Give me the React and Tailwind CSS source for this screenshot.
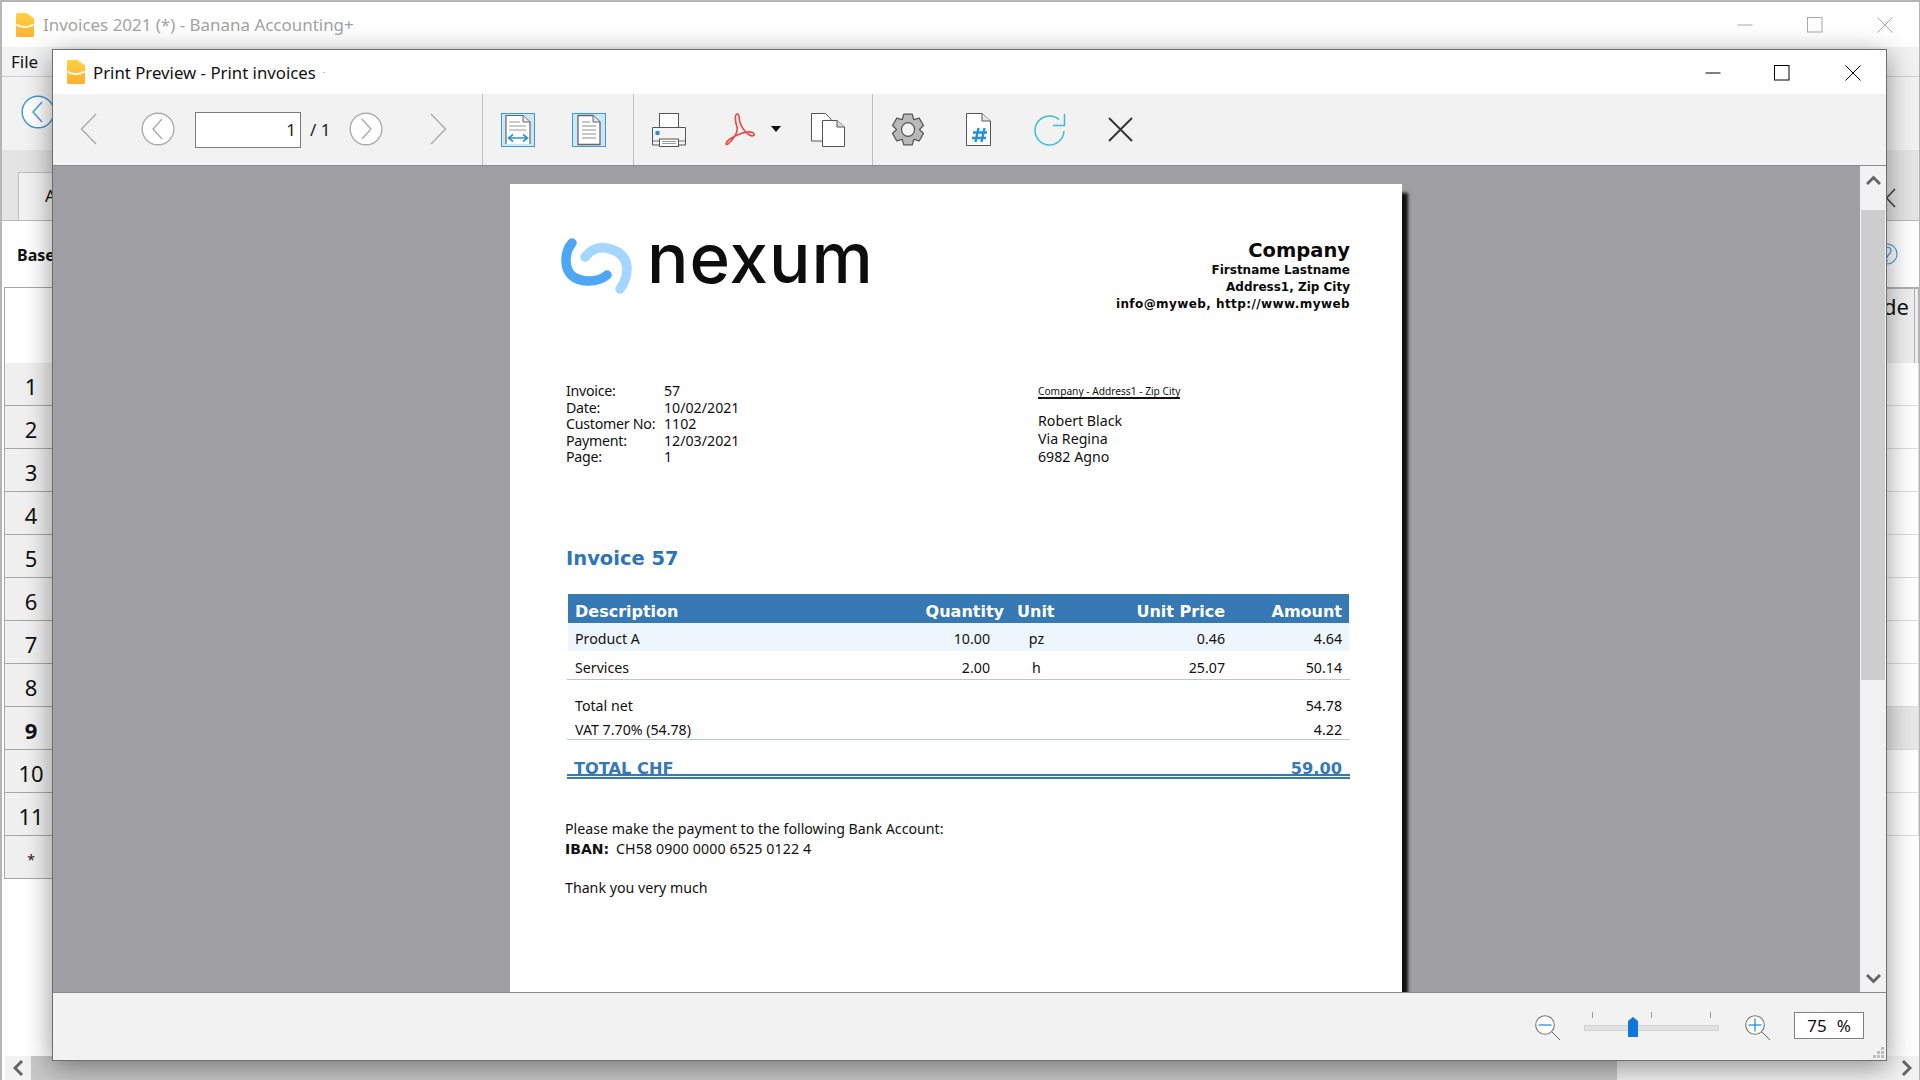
const doc = "font-['Noto_Sans','DejaVu_Sans',sans-serif]";
const bold = "font-['DejaVu_Sans',sans-serif] font-bold";

function BananaLogo({ className, id }) {
  return (
    <svg viewBox="0 0 18 24" width="18" height="24" className={className}>
      <defs>
        <linearGradient id={id} x1="0" y1="0" x2="0" y2="1">
          <stop offset="0" stopColor="#ffd23e" />
          <stop offset="1" stopColor="#ffb033" />
        </linearGradient>
      </defs>
      <path d="M1.5 0H10.5L18 5.5V22.5A1.5 1.5 0 0 1 16.5 24H1.5A1.5 1.5 0 0 1 0 22.5V1.5A1.5 1.5 0 0 1 1.5 0Z" fill={`url(#${id})`} />
      <path d="M0.5 11.5C5 15 13 15 17.5 11.5" fill="none" stroke="#fff" strokeWidth="1.8" />
    </svg>
  );
}

function WinControls({ color, gapA, gapB }) {
  return (
    <div className="flex items-center">
      <svg width="16" height="16" viewBox="0 0 16 16"><path d="M0.5 8H15.5" stroke={color} strokeWidth="1" /></svg>
      <svg width="16" height="16" viewBox="0 0 16 16" className={gapA}><rect x="0.5" y="0.5" width="14.5" height="14.5" fill="none" stroke={color} strokeWidth="1" /></svg>
      <svg width="16" height="16" viewBox="0 0 16 16" className={gapB}><path d="M0.5 0.5L15.5 15.5M15.5 0.5L0.5 15.5" stroke={color} strokeWidth="1" /></svg>
    </div>
  );
}

function CircleArrow({ left, className, color = "#adadad", chev = "#a8a8a8", fill = "#fff" }) {
  return (
    <svg width="34" height="34" viewBox="0 0 34 34" className={className}>
      <circle cx="17" cy="17" r="15.8" fill={fill} stroke={color} strokeWidth="1.4" />
      <path d={left ? "M21 7L12 17L21 27" : "M13 7L22 17L13 27"} fill="none" stroke={chev} strokeWidth="1.3" />
    </svg>
  );
}

function BigChevron({ left, className }) {
  return (
    <svg width="17" height="32" viewBox="0 0 17 32" className={className}>
      <path d={left ? "M16 1L1.5 16L16 31" : "M1 1L15.5 16L1 31"} fill="none" stroke="#ababab" strokeWidth="1.4" />
    </svg>
  );
}

function FitWidth({ className }) {
  return (
    <div className={"w-[34px] h-[34px] bg-[#cfe6f7] border border-[#3a9ad9] flex items-center justify-center " + className}>
      <svg width="28" height="32" viewBox="0 0 28 32">
        <path d="M2 30V1.5H19L26 8V30" fill="#fff" stroke="#666" strokeWidth="1.2" />
        <path d="M19 1.5V8H26" fill="#e8e8e8" stroke="#666" strokeWidth="1" />
        <path d="M5 8H16M5 12H22M5 16H22" stroke="#bbb" strokeWidth="1.3" />
        <path d="M5 24H23M9 20.5L4.5 24L9 27.5M19 20.5L23.5 24L19 27.5" fill="none" stroke="#2f93d9" strokeWidth="1.6" />
      </svg>
    </div>
  );
}

function FullPage({ className }) {
  return (
    <div className={"w-[34px] h-[34px] bg-[#cfe6f7] border border-[#3a9ad9] flex items-center justify-center " + className}>
      <svg width="26" height="32" viewBox="0 0 26 32">
        <path d="M2 30.5V1.5H17L24 8V30.5Z" fill="#fff" stroke="#666" strokeWidth="1.3" />
        <path d="M17 1.5V8H24" fill="#e8e8e8" stroke="#666" strokeWidth="1" />
        <path d="M6 8H14M6 12H20M6 16H20M6 20H20M6 24H20" stroke="#b5b5b5" strokeWidth="1.4" />
      </svg>
    </div>
  );
}

function Printer({ className }) {
  return (
    <svg width="34" height="34" viewBox="0 0 34 34" className={className}>
      <rect x="7.5" y="0.5" width="19" height="14" fill="#fff" stroke="#555" />
      <path d="M0.5 14.5H33.5V32H0.5Z" fill="#f4f4f4" stroke="#555" />
      <path d="M0.5 28H33.5" stroke="#555" strokeWidth="0.8" />
      <rect x="3.5" y="18" width="4" height="4" fill="#2a8ed8" />
      <rect x="7.5" y="26" width="19" height="7.5" fill="#fff" stroke="#555" />
      <path d="M10 28.5H24M10 30.5H24" stroke="#9a9a9a" strokeWidth="1" />
    </svg>
  );
}

function Pdf({ className }) {
  return (
    <svg width="31" height="33" viewBox="0 0 31 33" className={className}>
      <path d="M12.5 1C9.5 1 10 8 12 14C13.5 19 8 27 3 31C0 33 0.5 29 5 26C10 22.5 22 17 27.5 19.5C31.5 21.5 28 24 24.5 22C20 19.5 15.5 13 14.5 7.5C14 4.5 14.5 1 12.5 1Z" fill="none" stroke="#f04444" strokeWidth="1.6" />
    </svg>
  );
}

function Copy({ className }) {
  return (
    <svg width="34" height="34" viewBox="0 0 34 34" className={className}>
      <path d="M0.5 0.5H14.5L20 6V28H0.5Z" fill="#fff" stroke="#555" />
      <path d="M11.5 7.5H26L33.5 14V33.5H11.5Z" fill="#fff" stroke="#555" />
      <path d="M26 7.5V14H33.5" fill="#ddd" stroke="#555" />
    </svg>
  );
}

function gearPath() {
  const cx = 17, cy = 16.5;
  let d = "";
  for (let i = 0; i < 6; i++) {
    const a = (i * Math.PI * 2) / 6 - Math.PI / 2;
    const pts = [[-0.52, 11.5], [-0.27, 16], [0.27, 16], [0.52, 11.5]];
    pts.forEach(([da, r], j) => {
      const x = cx + r * Math.cos(a + da);
      const y = cy + r * Math.sin(a + da);
      d += (i === 0 && j === 0 ? "M" : "L") + x.toFixed(2) + " " + y.toFixed(2) + " ";
    });
  }
  return d + "Z";
}

function Gear({ className }) {
  return (
    <svg width="34" height="33" viewBox="0 0 34 33" className={className}>
      <path d={gearPath()} fill="#b9b9b9" stroke="#555" strokeWidth="1.2" strokeLinejoin="round" />
      <ellipse cx="17" cy="16.5" rx="6.5" ry="6.8" fill="#f2f2f2" stroke="#555" strokeWidth="1.2" />
    </svg>
  );
}

function HashDoc({ className }) {
  return (
    <svg width="25" height="33" viewBox="0 0 25 33" className={className}>
      <path d="M0.5 0.5H16L24.5 8V32.5H0.5Z" fill="#fff" stroke="#555" />
      <path d="M16 0.5V8H24.5" fill="#e8e8e8" stroke="#555" />
      <path d="M12.5 15L9.5 29M18.5 15L15.5 29M7 19.5H21M6 25H20" stroke="#2a8ed8" strokeWidth="2.4" />
    </svg>
  );
}

function Refresh({ className }) {
  return (
    <svg width="32" height="33" viewBox="0 0 32 33" className={className}>
      <path d="M30 18A14.5 14.5 0 1 1 25 6.5" fill="none" stroke="#3fbcd9" strokeWidth="1.5" />
      <path d="M30.5 1V12.5H19" fill="none" stroke="#3fbcd9" strokeWidth="1.5" />
    </svg>
  );
}

function CloseX({ className }) {
  return (
    <svg width="25" height="25" viewBox="0 0 25 25" className={className}>
      <path d="M1 1L24 24M24 1L1 24" stroke="#333" strokeWidth="1.9" />
    </svg>
  );
}

function Magnifier({ plus, className }) {
  return (
    <svg width="26" height="26" viewBox="0 0 26 26" className={className}>
      <circle cx="10" cy="10" r="9.3" fill="#fff" stroke="#777" strokeWidth="1.1" />
      <path d="M3.5 10H16.5" stroke="#2a8ed8" strokeWidth="1.3" />
      {plus && <path d="M10 3.5V16.5" stroke="#2a8ed8" strokeWidth="1.3" />}
      <path d="M17 17L25 25" stroke="#666" strokeWidth="1" />
    </svg>
  );
}

function Chev({ dir, className }) {
  const d = { up: "M1 9L7.5 2.5L14 9", down: "M1 2L7.5 8.5L14 2", left: "M9 1L2 8L9 15", right: "M2 1L9 8L2 15" }[dir];
  const vert = dir === "up" || dir === "down";
  return (
    <svg width={vert ? 15 : 11} height={vert ? 11 : 16} viewBox={vert ? "0 0 15 11" : "0 0 11 16"} className={className}>
      <path d={d} fill="none" stroke="#666" strokeWidth="3" />
    </svg>
  );
}

function NexumLogo() {
  return (
    <div className="flex items-start -ml-[4px]">
      <svg width="80" height="64" viewBox="556 232 80 64" className="shrink-0">
        <path d="M572 243Q566 250 566 260Q566 280 588 281Q600 281 607 275" fill="none" stroke="#4da7f6" strokeWidth="9.5" strokeLinecap="round" />
        <path d="M585 257Q592 248 602 247.5Q626 250 627 268Q627 280 620 289" fill="none" stroke="#a5d6ff" strokeWidth="9.5" strokeLinecap="round" />
      </svg>
      <span className="font-['Inter',sans-serif] font-medium text-[69px] leading-[64px] tracking-[1px] text-[#0d0d0d] ml-[11px] mt-[-6px]">nexum</span>
    </div>
  );
}

const metaRows = [
  ["Invoice:", "57"],
  ["Date:", "10/02/2021"],
  ["Customer No:", "1102"],
  ["Payment:", "12/03/2021"],
  ["Page:", "1"],
];

function Row({ d, q, u, p, a, className = "" }) {
  return (
    <div className={"flex items-center " + className}>
      <span className="w-[322px] pl-[7px] whitespace-nowrap">{d}</span>
      <span className="w-[100px] text-right">{q}</span>
      <span className="w-[47px] text-center ml-[23px]">{u}</span>
      <span className="w-[164px] text-right ml-[1px]">{p}</span>
      <span className="w-[117px] text-right">{a}</span>
    </div>
  );
}

function InvoicePage() {
  return (
    <div className={"w-[892px] h-[900px] bg-white ml-[457px] mt-[18px] shadow-[6px_9px_3px_rgba(0,0,0,0.9)] pl-[50px] pr-[52px] text-[14.2px] text-[#111] " + doc}>
      <div className="flex justify-between h-[116px]">
        <div className="mt-[48px]"><NexumLogo /></div>
        <div className={"text-right text-[#0a0a0a] pt-[55px] " + bold}>
          <div className="text-[19.5px] leading-[23px]">Company</div>
          <div className="text-[12px] leading-[17px]">Firstname Lastname</div>
          <div className="text-[12px] leading-[17px]">Address1, Zip City</div>
          <div className="text-[12px] leading-[17px] tracking-[0.42px]">info@myweb, http://www.myweb</div>
        </div>
      </div>
      <div className="flex h-[245px] pt-[83px]">
        <div className="w-[478px] pl-[6px] leading-[16.5px]">
          {metaRows.map(([k, v]) => (
            <div key={k} className="flex">
              <span className="w-[98px] whitespace-nowrap tracking-[-0.25px]">{k}</span>
              <span>{v}</span>
            </div>
          ))}
        </div>
        <div>
          <div className="text-[10.2px] mt-[3px] leading-[11px] border-b-2 border-[#111] whitespace-nowrap w-[142px]">Company - Address1 - Zip City</div>
          <div className="mt-[13px] leading-[18px]">
            <div>Robert Black</div>
            <div>Via Regina</div>
            <div>6982 Agno</div>
          </div>
        </div>
      </div>
      <div className={"text-[19.5px] leading-[28px] text-[#2f75b5] pl-[6px] h-[49px] " + bold}>Invoice 57</div>
      <div className="ml-[8px] w-[781px]">
        <div className={"bg-[#3779b5] text-white h-[29px] pt-[6px] leading-[24px] text-[16px] " + bold}>
          <div className="flex">
            <span className="w-[322px] pl-[7px]">Description</span>
            <span className="w-[114px] text-right">Quantity</span>
            <span className="ml-[13px] w-[42px]">Unit</span>
            <span className="w-[166px] text-right">Unit Price</span>
            <span className="w-[117px] text-right">Amount</span>
          </div>
        </div>
        <Row className="h-[28px] bg-[#eef6fd] pt-[3px]" d="Product A" q="10.00" u="pz" p="0.46" a="4.64" />
        <Row className="h-[29px] border-b border-[#b4c8dc] -ml-px w-[783px] pl-px pt-[5px]" d="Services" q="2.00" u="h" p="25.07" a="50.14" />
        <Row className="h-[25px] mt-[13px]" d="Total net" a="54.78" />
        <Row className="h-[22px] border-b border-[#b4c8dc] -ml-px pl-px w-[783px] pt-[3px]" d="VAT 7.70% (54.78)" a="4.22" />
        <div className={"h-[39px] overflow-hidden -ml-px w-[783px] flex justify-between items-end text-[#3779b5] text-[16.2px] leading-[20px] pl-[7px] pr-[8px] border-b-[5px] border-double border-[#3779b5] " + bold}>
          <span className="-mb-[5px]">TOTAL CHF</span>
          <span className="-mb-[5px]">59.00</span>
        </div>
      </div>
      <div className="mt-[40px] ml-[5px] leading-[20px]">
        <div>Please make the payment to the following Bank Account:</div>
        <div className="flex">
          <span className={"text-[14px] mr-[7px] " + bold}>IBAN:</span>
          <span className="tracking-[0.12px]">CH58 0900 0000 6525 0122 4</span>
        </div>
        <div className="mt-[19px]">Thank you very much</div>
      </div>
    </div>
  );
}

function DialogToolbar() {
  return (
    <div className="h-[71px] bg-[#f2f2f2] flex items-center shrink-0 border-b border-[#8a8a8f] box-content text-[#222]">
      <BigChevron left className="ml-[27px] -mt-[1px]" />
      <CircleArrow left className="ml-[44px] -mt-[2px]" />
      <div className="ml-[20px] w-[106px] h-[36px] bg-white border border-[#7a7a7a] flex items-center justify-end pr-[4px] text-[17px] font-['Noto_Sans',sans-serif]">1</div>
      <span className="ml-[9px] w-[20px] text-[17px] whitespace-nowrap font-['Noto_Sans',sans-serif]">/ 1</span>
      <CircleArrow className="ml-[19px] -mt-[2px]" />
      <BigChevron className="ml-[47px] -mt-[1px]" />
      <div className="self-stretch w-px bg-[#c0c0c0] ml-[35px]" />
      <FitWidth className="ml-[18px]" />
      <FullPage className="ml-[37px]" />
      <div className="self-stretch w-px bg-[#c0c0c0] ml-[27px]" />
      <Printer className="ml-[18px]" />
      <Pdf className="ml-[39px]" />
      <svg width="10" height="6" viewBox="0 0 10 6" className="ml-[15px] -mt-[2px]"><path d="M0 0H10L5 6Z" fill="#111" /></svg>
      <Copy className="ml-[30px]" />
      <div className="self-stretch w-px bg-[#c0c0c0] ml-[27px]" />
      <Gear className="ml-[18px]" />
      <HashDoc className="ml-[41px]" />
      <Refresh className="ml-[43px]" />
      <CloseX className="ml-[42px]" />
    </div>
  );
}

function DialogFooter() {
  return (
    <div className="h-[68px] bg-[#f2f2f2] flex border-t border-[#8a8a8f] shrink-0 relative">
      <div className="ml-auto mr-[22px] flex items-start pt-[20px]">
        <Magnifier className="-mr-[1px] mt-[2px]" />
        <div className="ml-[24px] w-[135px] h-[25px] relative -mt-[1px]">
          <div className="flex justify-between px-[8px] h-[6px]">
            <div className="w-px bg-[#9b9b90]" />
            <div className="w-px bg-[#9b9b90]" />
            <div className="w-px bg-[#9b9b90]" />
          </div>
          <div className="mt-[7px] h-[4px] bg-[#e2e2e2] border border-[#d2d2d2] box-content" />
          <div className="absolute left-[44px] top-[5px] w-[10px] h-[20px] bg-[#0f77dc] [clip-path:polygon(0_20%,50%_0,100%_20%,100%_100%,0_100%)]" />
        </div>
        <Magnifier plus className="ml-[26px] mt-[2px]" />
        <div className="ml-[23px] -mt-[1px] w-[70px] h-[27px] bg-white border border-[#7f7f7f] flex items-center justify-center gap-[10px] text-[17px] text-[#111] font-['Noto_Sans',sans-serif]">
          <span>75</span><span>%</span>
        </div>
      </div>
      <svg width="12" height="12" viewBox="0 0 12 12" className="absolute right-[1px] bottom-[1px]">
        <path d="M8 0h3v3H8zM4 4h3v3H4zM8 4h3v3H8zM0 8h3v3H0zM4 8h3v3H4zM8 8h3v3H8z" fill="#bdbdbd" />
      </svg>
    </div>
  );
}

function Dialog() {
  return (
    <div className="absolute left-[50px] top-[47px] w-[1835px] h-[1012px] bg-white border border-[#6e6e6e] shadow-[0_6px_26px_rgba(0,0,0,0.42)] flex flex-col">
      <div className="h-[44px] bg-white flex items-center shrink-0 pl-[14px] pr-[25px]">
        <BananaLogo id="b2" />
        <span className="ml-[8px] mt-[2px] text-[16.8px] text-[#111] font-['Noto_Sans',sans-serif] whitespace-nowrap">Print Preview - Print invoices</span>
        <span className="ml-[7px] text-[10px] text-[#999]">·</span>
        <div className="ml-auto mt-[1px]">
          <WinControls color="#000" gapA="ml-[53px]" gapB="ml-[55px]" />
        </div>
      </div>
      <DialogToolbar />
      <div className="flex-1 flex min-h-0 bg-[#9f9ea3]">
        <div className="flex-1 overflow-hidden min-w-0">
          <InvoicePage />
        </div>
        <div className="w-[26px] bg-[#f2f2f2] flex flex-col shrink-0">
          <div className="h-[44px] flex justify-center pt-[9px]"><Chev dir="up" /></div>
          <div className="h-[470px] bg-[#cdcdcd] mx-px" />
          <div className="flex-1" />
          <div className="h-[32px] flex justify-center items-center pt-[5px]"><Chev dir="down" /></div>
        </div>
      </div>
      <DialogFooter />
    </div>
  );
}

const rows = ["1", "2", "3", "4", "5", "6", "7", "8", "9", "10", "11", "*"];

export default function App() {
  return (
    <div className="relative w-[1920px] h-[1080px] overflow-hidden bg-white border-t-2 border-l-2 border-r border-[#b5b5b5] font-['Noto_Sans',sans-serif]">
      <div className="flex flex-col h-full">
        <div className="h-[45px] flex items-center pl-[14px] pr-[26px] shrink-0">
          <BananaLogo id="b1" />
          <span className="ml-[9px] text-[16.95px] text-[#a3a3a3] whitespace-nowrap">Invoices 2021 (*) - Banana Accounting+</span>
          <div className="ml-auto"><WinControls color="#a9a9a9" gapA="ml-[54px]" gapB="ml-[54px]" /></div>
        </div>
        <div className="h-[30px] bg-[#f2f2f2] border-b border-[#d0d0d0] flex items-center pl-[9px] text-[17px] text-[#111] shrink-0">File</div>
        <div className="h-[73px] bg-[#f2f2f2] flex items-center pl-[19px] pb-[3px] shrink-0">
          <CircleArrow left color="#3a96d6" chev="#3a96d6" />
        </div>
        <div className="h-[71px] bg-[#e4e4e4] border-b border-[#b8b8b8] flex items-end justify-between shrink-0">
          <div className="ml-[16px] w-[60px] h-[48px] bg-[#f2f2f2] border border-b-0 border-[#c0c0c0] pl-[26px] pt-[10px] text-[17px] text-[#111]">A</div>
          <svg width="11" height="20" viewBox="0 0 11 20" className="mb-[12px] mr-[23px]"><path d="M10 1L1.5 10L10 19" fill="none" stroke="#444" strokeWidth="1.6" /></svg>
        </div>
        <div className="flex-1 flex justify-between min-h-0">
          <div className="pl-[2px] flex flex-col">
            <div className="h-[66px] flex items-center pl-[13px] pt-[1px] text-[16px] font-bold text-[#111]">Base</div>
            <div className="w-[140px] h-[76px] border-t border-l border-[#a8a8a8]" />
            {rows.map((r) => (
              <div key={r} className={"w-[140px] h-[43px] bg-[#f0f0f0] border-b border-l border-[#a8a8a8] flex items-center pt-[5px] " + (r === "9" ? "font-bold text-[22px] text-[#111]" : r === "*" ? "text-[14px] text-[#222]" : "text-[22px] text-[#111]")}>
                <span className="w-[52px] text-center">{r}</span>
              </div>
            ))}
          </div>
          <div className="w-[60px] flex flex-col">
            <div className="h-[66px] flex items-center justify-end pr-[18px]">
              <svg width="24" height="24" viewBox="0 0 24 24"><circle cx="10" cy="12" r="10" fill="none" stroke="#4aa0dc" strokeWidth="1.2" /><path d="M7 9C7 4 14 4 14 9C14 12 10 12 10 16M10 18V20" fill="none" stroke="#4aa0dc" strokeWidth="1.2" /></svg>
            </div>
            <div className="h-[76px] bg-[#efefef] border-t-2 border-r border-[#b0b0b0] flex items-start">
              <span className="flex-1 pl-[24px] text-[22px] leading-[34px] text-[#111]">de</span>
              <div className="self-stretch w-px bg-[#b0b0b0] mr-[3px]" />
            </div>
            {rows.slice(0, 11).map((r) => (
              <div key={r} className={"h-[43px] border-b border-r border-[#dddddd] " + (r === "9" ? "bg-[#e8e8e8]" : "bg-white")} />
            ))}
          </div>
        </div>
        <div className="h-[24px] bg-[#f2f2f2] flex items-center shrink-0 ml-[3px]">
          <div className="w-[26px] flex justify-center"><Chev dir="left" /></div>
          <div className="w-[1586px] h-full bg-[#c8c8c8]" />
          <div className="flex-1" />
          <div className="w-[26px] flex justify-center"><Chev dir="right" /></div>
        </div>
      </div>
      <Dialog />
    </div>
  );
}
